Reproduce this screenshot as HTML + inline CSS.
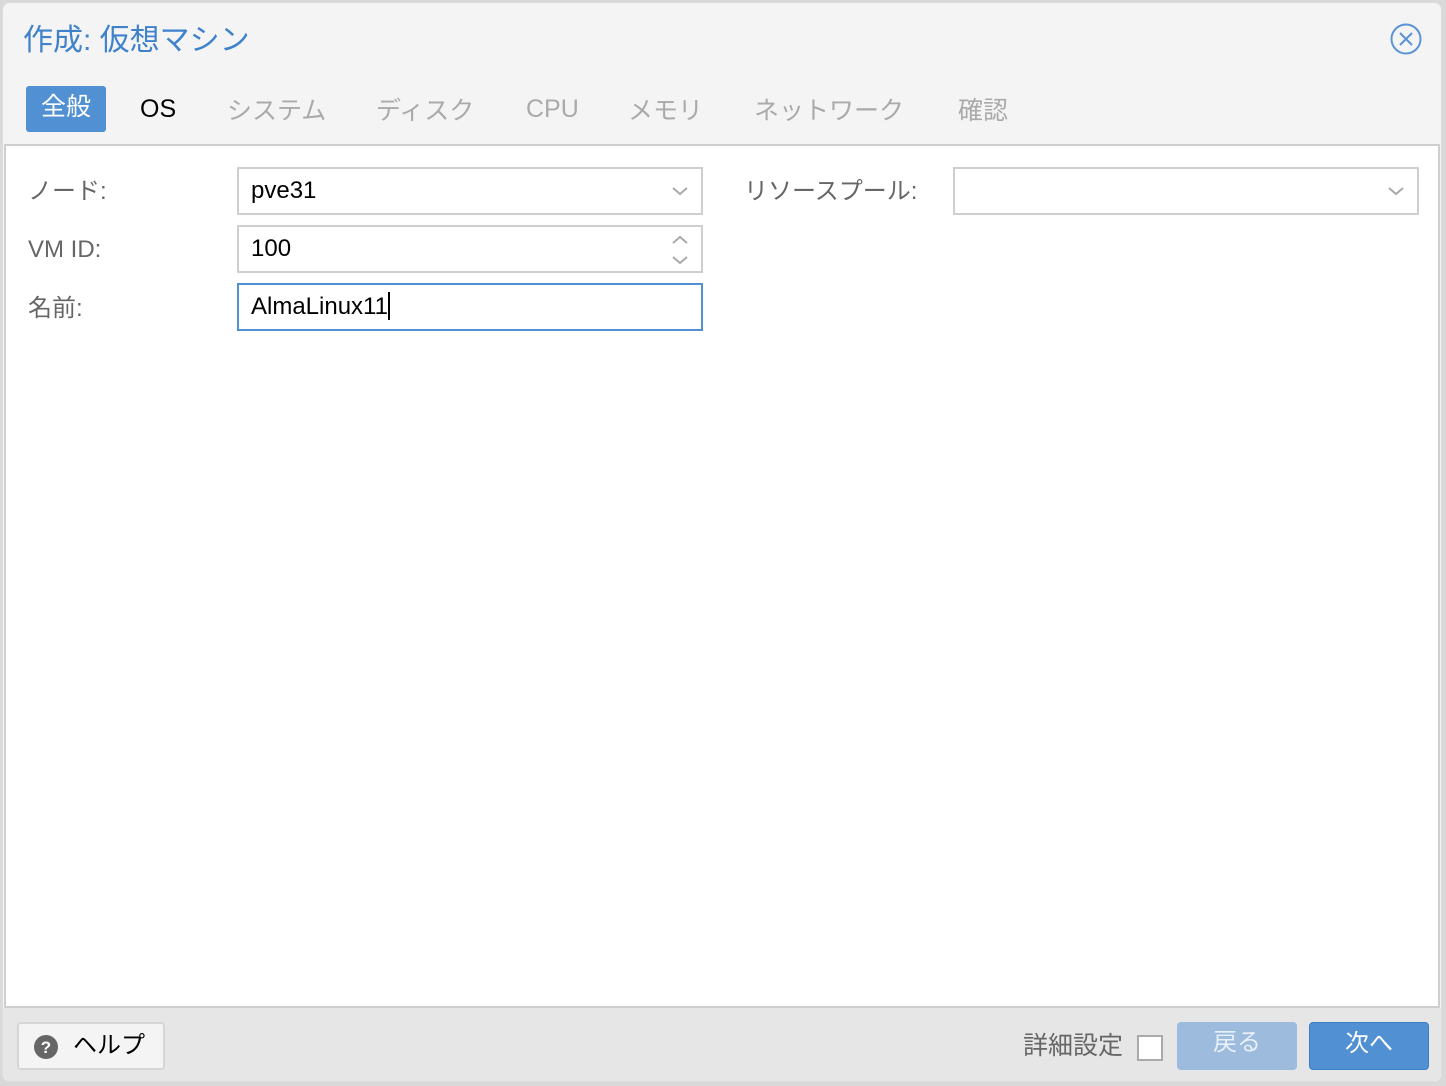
<!DOCTYPE html>
<html><head><meta charset="utf-8"><style>
*{box-sizing:border-box;margin:0;padding:0}
body{width:1446px;height:1086px;background:#d9d9d9;position:relative;overflow:hidden;font-family:"Liberation Sans","Noto Sans CJK JP",sans-serif}
.dlg{position:absolute;left:2px;top:2px;width:1440px;height:1080px;background:#f4f4f4;border-radius:8px;border:1px solid #ddd}
.abs{position:absolute;white-space:nowrap}
.title{left:20px;top:12px;font-size:30px;color:#3f82cb}
.tab{top:88px;font-size:25px;color:#aaa}
.tabsel{left:23px;top:83px;width:80px;height:46px;background:#5190d2;border-radius:3px;color:#fff;font-size:25px;text-align:center;line-height:42px}
.panel{position:absolute;left:1px;top:141px;width:1436px;height:864px;background:#fff;border:2px solid #cfcfcf}
.foot{position:absolute;left:0;top:1005px;width:1438px;height:73px;background:#e6e6e6;border-radius:0 0 8px 8px}
.lbl{font-size:24px;color:#666}
.inp{position:absolute;border:2px solid #cfcfcf;background:#fff;height:48px;font-size:24px;color:#000;padding-left:12px;line-height:44px}
</style></head><body>
<div class="dlg">
<div class="abs title">作成: 仮想マシン</div>
<svg class="abs" style="left:1386px;top:19px" width="34" height="34" viewBox="0 0 34 34"><circle cx="17" cy="17" r="14.5" fill="none" stroke="#5b93d6" stroke-width="2"/><path d="M11 11L23 23M23 11L11 23" stroke="#5b93d6" stroke-width="2"/></svg>
<div class="abs tabsel">全般</div>
<div class="abs tab" style="left:137px;top:92px;color:#000">OS</div>
<div class="abs tab" style="left:224px">システム</div>
<div class="abs tab" style="left:373px">ディスク</div>
<div class="abs tab" style="left:523px;top:92px">CPU</div>
<div class="abs tab" style="left:625px">メモリ</div>
<div class="abs tab" style="left:751px">ネットワーク</div>
<div class="abs tab" style="left:955px">確認</div>
<div class="panel">
<div class="abs lbl" style="left:22px;top:25px">ノード:</div>
<div class="abs lbl" style="left:22px;top:90px">VM ID:</div>
<div class="abs lbl" style="left:22px;top:142px">名前:</div>
<div class="inp" style="left:231px;top:21px;width:466px">pve31
<svg class="abs" style="right:12px;top:16px" width="18" height="12"><path d="M2 3L9 9L16 3" fill="none" stroke="#aaa" stroke-width="2"/></svg></div>
<div class="inp" style="left:231px;top:79px;width:466px">100
<svg class="abs" style="right:12px;top:6px" width="18" height="34"><path d="M2 10L9 4L16 10M2 24L9 30L16 24" fill="none" stroke="#aaa" stroke-width="2"/></svg></div>
<div class="inp" style="left:231px;top:137px;width:466px;border-color:#5190d2">AlmaLinux11<span style="display:inline-block;width:2px;height:28px;background:#000;vertical-align:middle;margin-top:-4px"></span></div>
<div class="abs lbl" style="left:738px;top:25px">リソースプール:</div>
<div class="inp" style="left:947px;top:21px;width:466px">
<svg class="abs" style="right:12px;top:16px" width="18" height="12"><path d="M2 3L9 9L16 3" fill="none" stroke="#aaa" stroke-width="2"/></svg></div>
</div>
<div class="foot">
<div class="abs" style="left:14px;top:14px;width:148px;height:48px;background:#f4f4f4;border:2px solid #d6d6d6;border-radius:4px"></div>
<svg class="abs" style="left:31px;top:27px" width="24" height="24"><circle cx="12" cy="12" r="12" fill="#666"/><text x="12" y="18" text-anchor="middle" font-family="Liberation Sans" font-weight="bold" font-size="17" fill="#fff">?</text></svg>
<div class="abs" style="left:70px;top:17px;font-size:24px;color:#000">ヘルプ</div>
<div class="abs" style="left:1020px;top:18px;font-size:25px;color:#666">詳細設定</div>
<div class="abs" style="left:1134px;top:27px;width:26px;height:26px;border:2px solid #aaa;background:#fff"></div>
<div class="abs" style="left:1174px;top:14px;width:120px;height:48px;background:#9dbbdc;border-radius:4px;color:#e8f0f8;font-size:24px;text-align:center;line-height:42px">戻る</div>
<div class="abs" style="left:1306px;top:14px;width:120px;height:48px;background:#5190d2;border:1px solid #3d7fc7;border-radius:4px;color:#fff;font-size:24px;text-align:center;line-height:42px">次へ</div>
</div>
</div>
</body></html>
